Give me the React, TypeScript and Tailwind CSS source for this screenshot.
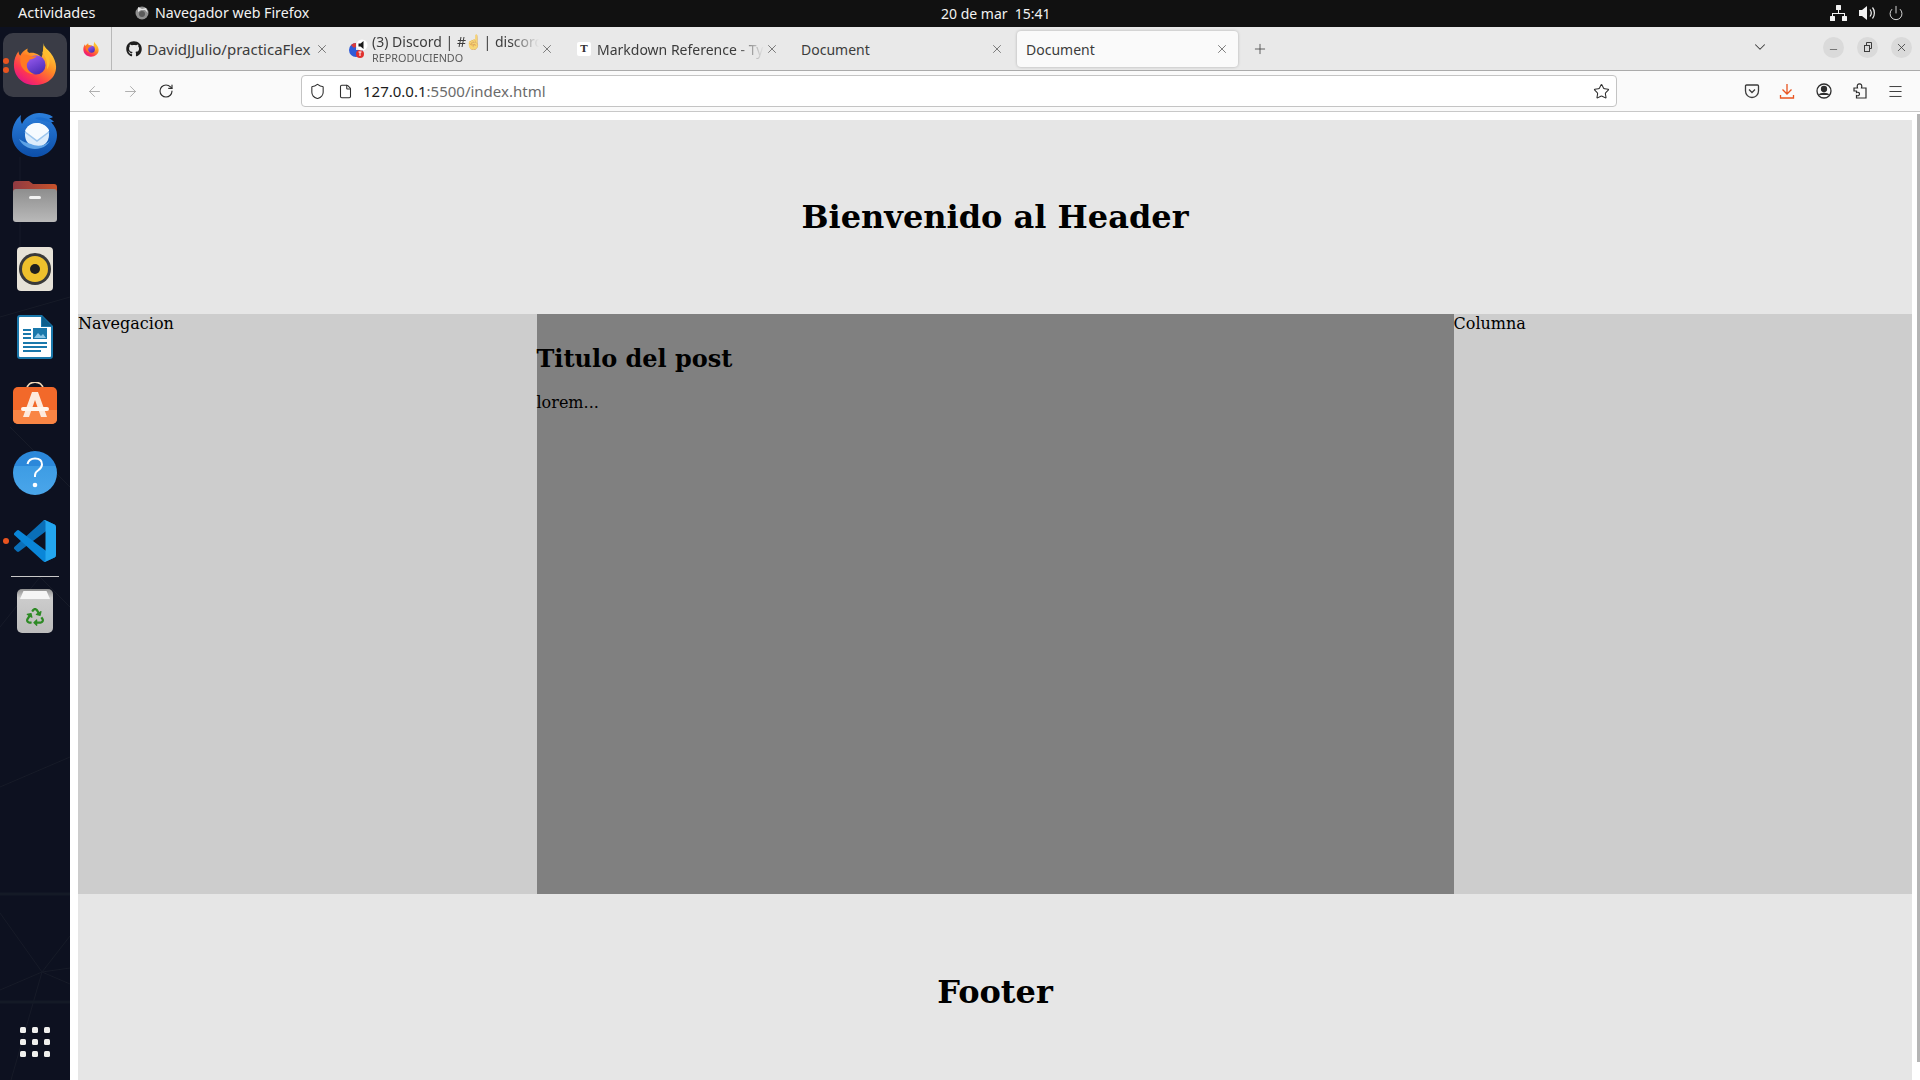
import { ReactNode } from "react";
import { FaGithub, FaRecycle } from "react-icons/fa";
import {
  ArrowLeft,
  ArrowRight,
  ChevronDown,
  File,
  Menu,
  Minus,
  Plus,
  Power,
  RotateCw,
  Shield,
  Star,
  X,
} from "lucide-react";

const serif = "font-['DejaVu_Serif',serif]";
const ui = "font-['Noto_Sans',sans-serif]";

function FirefoxIcon({ size }: { size: number }) {
  return (
    <svg width={size} height={size} viewBox="0 0 48 48">
      <defs>
        <linearGradient id="ffBody" x1="0.8" y1="0.1" x2="0.2" y2="0.95">
          <stop offset="0" stopColor="#ffd43a" />
          <stop offset="0.4" stopColor="#ff8a25" />
          <stop offset="0.75" stopColor="#ff3750" />
          <stop offset="1" stopColor="#e31587" />
        </linearGradient>
        <linearGradient id="ffBall" x1="0.2" y1="0" x2="0.7" y2="1">
          <stop offset="0" stopColor="#9a5cf0" />
          <stop offset="1" stopColor="#4a2bb5" />
        </linearGradient>
      </defs>
      <path
        d="M33 1c1 5 5 7 8 11 4 5 6 11 6 15 0 12-10 20-23 20S1 38 1 25C1 19 3 14 6 10c0 2 1 4 2 5 1-3 4-6 8-8-1 3 0 4 2 5 6-1 11 2 13 5 2-5 3-11 2-16z"
        fill="url(#ffBody)"
      />
      <circle cx="25" cy="25" r="10.5" fill="url(#ffBall)" />
      <path
        d="M8 15c3-2 7-2 10 0 3 1 6 1 8 0-2 3-5 4-8 4 0 2-3 3-3 6 0 5 4 9 9 10-8 1-16-6-16-14 0-2 0-4 0-6z"
        fill="#ff7a22"
      />
      <path d="M33 4c3 4 7 9 7 17 0 3-1 6-3 9 1-8-1-14-5-18 1-3 1-5 1-8z" fill="#ffbd2e" />
    </svg>
  );
}

function ThunderbirdIcon() {
  return (
    <svg width="48" height="48" viewBox="0 0 48 48">
      <defs>
        <linearGradient id="tbBody" x1="0.5" y1="0" x2="0.5" y2="1">
          <stop offset="0" stopColor="#2b7fdc" />
          <stop offset="1" stopColor="#0c4ea8" />
        </linearGradient>
      </defs>
      <path
        d="M10 6c-1 4 0 7 1 9 3-7 10-11 17-11 5 0 10 1 14 4-1 1-3 1-4 1 2 1 4 3 5 4-1 0-2 0-3 0 4 4 6 9 6 13 0 12-10 22-22 22S1 38 1 26c0-8 3-15 9-20z"
        fill="url(#tbBody)"
      />
      <path d="M24 9c6-2 13 0 17 5-6-2-13-2-17-5z" fill="#1c6fd0" />
      <circle cx="26" cy="26" r="12" fill="#dcecfb" />
      <path d="M14 22l12 9 12-9v-1c-3-5-8-7-12-7-6 0-10 3-12 8z" fill="#f6fbff" />
      <path d="M14 23l12 9 12-9" fill="none" stroke="#9cc6ee" strokeWidth="1.5" />
      <path d="M8 30c4 8 13 12 22 9 4-1 7-4 9-7-5 5-13 6-19 3-5-1-9-3-12-5z" fill="#5da2e6" />
    </svg>
  );
}

function FilesIcon() {
  return (
    <svg width="44" height="41" viewBox="0 0 44 41">
      <defs>
        <linearGradient id="folderTab" x1="0" y1="0" x2="1" y2="0">
          <stop offset="0" stopColor="#8f3a42" />
          <stop offset="1" stopColor="#c8532b" />
        </linearGradient>
        <linearGradient id="folderBody" x1="0" y1="0" x2="0" y2="1">
          <stop offset="0" stopColor="#8e8e8e" />
          <stop offset="1" stopColor="#b9b9b9" />
        </linearGradient>
      </defs>
      <path d="M3 0h13l4 3h21a3 3 0 0 1 3 3v14H0V3a3 3 0 0 1 3-3z" fill="url(#folderTab)" />
      <path d="M3 8h38a3 3 0 0 1 3 3v27a3 3 0 0 1-3 3H3a3 3 0 0 1-3-3V11a3 3 0 0 1 3-3z" fill="url(#folderBody)" />
      <rect x="16" y="15" width="12" height="3" rx="1.5" fill="#f2f2f2" />
    </svg>
  );
}

function RhythmboxIcon() {
  return (
    <svg width="36" height="44" viewBox="0 0 36 44">
      <rect width="36" height="44" rx="4" fill="#e6e2d8" />
      <circle cx="18" cy="22" r="16" fill="#3a3a3a" />
      <circle cx="18" cy="22" r="13" fill="#eec02c" />
      <circle cx="18" cy="22" r="5" fill="#1f1f1f" />
    </svg>
  );
}

function WriterIcon() {
  return (
    <svg width="36" height="44" viewBox="0 0 36 44">
      <path d="M3 0h22l11 11v30a3 3 0 0 1-3 3H3a3 3 0 0 1-3-3V3a3 3 0 0 1 3-3z" fill="#1a78ab" />
      <path d="M3 2h21v10h10v29a1 1 0 0 1-1 1H3a1 1 0 0 1-1-1V3a1 1 0 0 1 1-1z" fill="#fff" />
      <path d="M25 1l10 10H25z" fill="#0d5f8d" />
      <rect x="6" y="14" width="8" height="2" fill="#1a78ab" />
      <rect x="6" y="18" width="8" height="2" fill="#1a78ab" />
      <rect x="6" y="22" width="8" height="2" fill="#1a78ab" />
      <rect x="16" y="13" width="14" height="11" fill="#1a78ab" />
      <path d="M17 23l4-5 3 3 2-2 3 4z" fill="#8cc6e6" />
      <rect x="6" y="27" width="24" height="2" fill="#1a78ab" />
      <rect x="6" y="31" width="24" height="2" fill="#1a78ab" />
      <rect x="6" y="35" width="18" height="2" fill="#1a78ab" />
    </svg>
  );
}

function StoreIcon() {
  return (
    <svg width="44" height="42" viewBox="0 0 44 42" className="-mt-[4px]">
      <path d="M14 7c0-9 16-9 16 0" fill="none" stroke="#f1d8b8" strokeWidth="1.6" />
      <rect y="5" width="44" height="37" rx="5" fill="#f2692a" />
      <path d="M0 28h44v9a5 5 0 0 1-5 5H5a5 5 0 0 1-5-5z" fill="#f98544" />
      <path d="M19 10h6l9 25h-6l-6-17-6 17h-6z" fill="#fdeadd" />
      <rect x="8" y="25" width="28" height="4" rx="2" fill="#fff6ee" />
    </svg>
  );
}

function HelpIcon() {
  return (
    <div className="flex h-[44px] w-[44px] items-center justify-center rounded-full bg-[linear-gradient(#2b88da_33%,#3d9ce4_33%,#4aa6ea)]">
      <svg width="20" height="32" viewBox="0 0 20 32">
        <path
          d="M2.500 7c1-4 4-5.500 7.500-5.500 4.500 0 7 2.500 7 6 0 3-2 4.500-4 6-2 1.300-3 2.500-3 5v1.500"
          fill="none"
          stroke="#fff"
          strokeWidth="2"
        />
        <circle cx="10" cy="28" r="2.300" fill="#fff" />
      </svg>
    </div>
  );
}

function VSCodeIcon() {
  return (
    <svg width="42" height="42" viewBox="0 0 100 100">
      <path
        d="M96.500 10.800 75.900.900a6.200 6.200 0 0 0-7.100 1.200L1.400 63.600a4.200 4.200 0 0 0 0 6.200l5.500 5a4.200 4.200 0 0 0 5.300.2L93.300 13.500c2.700-2.100 6.700-.2 6.700 3.300v-.2a6.200 6.200 0 0 0-3.500-5.800z"
        fill="#0a6fb8"
      />
      <path
        d="M96.500 89.200 75.900 99.100a6.200 6.200 0 0 1-7.100-1.200L1.400 36.400a4.200 4.200 0 0 1 0-6.200l5.500-5a4.200 4.200 0 0 1 5.300-.2l81.100 61.500c2.700 2.100 6.700.2 6.700-3.300v.2a6.200 6.200 0 0 1-3.500 5.800z"
        fill="#0a86d8"
      />
      <path
        d="M75.900 99.100a6.200 6.200 0 0 1-7.100-1.200c2.300 2.300 6.200.7 6.200-2.600V4.700c0-3.300-3.900-4.900-6.200-2.600a6.200 6.200 0 0 1 7.100-1.200l20.600 9.900a6.200 6.200 0 0 1 3.500 5.600v67.200a6.200 6.200 0 0 1-3.500 5.600z"
        fill="#23a6ef"
      />
    </svg>
  );
}

function TrashIcon() {
  return (
    <div className="flex h-[44px] w-[36px] flex-col items-center rounded-[5px] bg-[linear-gradient(#8f8f8f,#cccccc_20%,#bcbcbc)]">
      <svg className="mt-[2px]" width="30" height="8" viewBox="0 0 30 8">
        <path d="M0 8l3-7q0-1 1-1h22q1 0 1 1l3 7z" fill="#f5f5f5" />
      </svg>
      <FaRecycle size={18} className="mt-[9px] text-[#2d8a25]" />
    </div>
  );
}

function DockItem({ children, active, dots }: { children: ReactNode; active?: boolean; dots?: number }) {
  return (
    <div className="relative flex h-[68px] w-[70px] items-center justify-center">
      {active && <div className="absolute left-[3px] top-[2px] h-[64px] w-[64px] rounded-[10px] bg-[#3a3c46]" />}
      {dots ? (
        <div className="absolute left-[3px] top-0 flex h-full flex-col justify-center gap-[3px]">
          {Array.from({ length: dots }).map((_, i) => (
            <span key={i} className="h-[6px] w-[6px] rounded-full bg-[#e9541f]" />
          ))}
        </div>
      ) : null}
      <div className="relative flex items-center justify-center">{children}</div>
    </div>
  );
}

function Dock() {
  return (
    <aside className="relative flex h-full w-[70px] shrink-0 flex-col overflow-hidden bg-[#0d1120] pt-[4px]">
      <svg className="absolute left-0 top-0" width="70" height="1053" viewBox="0 0 70 1053">
        <g stroke="#171b28" strokeWidth="1" fill="none">
          <path d="M0 886l42 59 28-36M42 945l28-4M42 945l28 12M42 945L0 963M42 945l-31 108" />
          <path d="M0 290l70-20M0 600l40-50 30 30M10 400l60 60M20 130v100M0 760l70-30" />
        </g>
        <path d="M0 867h70M0 975h70" stroke="#141a26" strokeWidth="3" />
      </svg>
      <DockItem active dots={2}>
        <div className="-mt-[2px]">
          <FirefoxIcon size={44} />
        </div>
      </DockItem>
      <DockItem>
        <ThunderbirdIcon />
      </DockItem>
      <DockItem>
        <FilesIcon />
      </DockItem>
      <DockItem>
        <RhythmboxIcon />
      </DockItem>
      <DockItem>
        <WriterIcon />
      </DockItem>
      <DockItem>
        <StoreIcon />
      </DockItem>
      <DockItem>
        <HelpIcon />
      </DockItem>
      <DockItem dots={1}>
        <VSCodeIcon />
      </DockItem>
      <div className="relative mx-[11px] mt-[1px] h-px bg-[#c8c8c8]" />
      <DockItem>
        <TrashIcon />
      </DockItem>
      <div className="relative mb-[23px] mt-auto grid grid-cols-3 gap-[6px] self-center">
        {Array.from({ length: 9 }).map((_, i) => (
          <span key={i} className="h-[6px] w-[6px] rounded-[1.500px] bg-[#f0f0ee]" />
        ))}
      </div>
    </aside>
  );
}

function TopBar() {
  return (
    <header className={`flex h-[27px] shrink-0 items-center bg-[#111111] pb-[1px] text-[14px] text-[#f2f2f2] ${ui}`}>
      <div className="flex w-[941px] items-center">
        <span className="ml-[18px] w-[116px] text-[14.500px]">Actividades</span>
        <svg width="16" height="16" viewBox="0 0 16 16">
          <circle cx="8" cy="8" r="6.500" fill="#8f8f8f" />
          <path d="M4 2l4 2 4-1 2 5-3-3H7L4 7z" fill="#e4e4e4" />
          <circle cx="8" cy="9" r="3" fill="#5a5a5a" />
        </svg>
        <span className="ml-[5px] text-[14.200px]">Navegador web Firefox</span>
      </div>
      <span>20 de mar&nbsp;&nbsp;15:41</span>
      <div className="ml-auto mr-[16px] flex items-center gap-[12px]">
        <svg width="17" height="16" viewBox="0 0 17 16" fill="#f2f2f2">
          <rect x="6" y="0" width="5" height="5" rx="0.500" />
          <rect x="0" y="11" width="5" height="5" rx="0.500" />
          <rect x="12" y="11" width="5" height="5" rx="0.500" />
          <path d="M8 5h1v3h6v3h-1V9H3v2H2V8h6z" />
        </svg>
        <svg width="17" height="16" viewBox="0 0 17 16" fill="none">
          <path d="M0 5h3l5-4v14l-5-4H0z" fill="#f2f2f2" />
          <path d="M11 4.500c1.500 2 1.500 5 0 7M13.500 2.500c2.500 3 2.500 8 0 11" stroke="#f2f2f2" strokeWidth="1.200" />
        </svg>
        <Power size={16} strokeWidth={1.300} className="text-[#f2f2f2]" />
      </div>
    </header>
  );
}

function Tab({
  icon,
  title,
  sub,
  active,
  fade,
}: {
  icon?: ReactNode;
  title: ReactNode;
  sub?: string;
  active?: boolean;
  fade?: boolean;
}) {
  return (
    <div
      className={`flex h-[36px] w-[221px] shrink-0 items-center pl-[9px] pr-[9px] ${
        active ? "rounded-[4px] bg-[#fafafa] shadow-[0_0_3px_rgba(0,0,0,0.25)]" : ""
      }`}
    >
      {icon && <div className="mr-[5px] flex h-[16px] w-[16px] shrink-0 items-center justify-center">{icon}</div>}
      <div
        className={`min-w-0 flex-1 overflow-hidden whitespace-nowrap ${
          fade ? "[mask-image:linear-gradient(to_left,transparent,black_28px)]" : ""
        }`}
      >
        <div className={`text-[14px] text-[#3c3c3c] ${sub ? "-mt-[1px] leading-[18px]" : "mt-[2px] leading-[20px]"}`}>
          {title}
        </div>
        {sub && <div className="mt-[1px] text-[10.800px] leading-[12px] text-[#5a5a5a]">{sub}</div>}
      </div>
      <X size={14} strokeWidth={1.200} className="ml-[1px] shrink-0 text-[#4a4a4a]" />
    </div>
  );
}

function TabBar() {
  return (
    <div className={`flex h-[44px] shrink-0 items-center border-b border-[#ababab] bg-[#e9e9e9] ${ui}`}>
      <div className="flex h-full w-[42px] shrink-0 items-center justify-center border-r border-[#b8b8b8]">
        <FirefoxIcon size={16} />
      </div>
      <div className="ml-[5px] flex items-center gap-[4px]">
        <Tab
          icon={<FaGithub size={16} className="text-[#1e1e1e]" />}
          title={<span className="text-[15px]">DavidJJulio/practicaFlex</span>}
        />
        <Tab
          icon={
            <svg width="20" height="20" viewBox="0 0 20 20" className="-ml-[2px] shrink-0">
              <path d="M8 4a7 7 0 1 0 7 7H8z" fill="#2f5bd8" />
              <path d="M3 6a7 7 0 0 1 5-2v4a3 3 0 0 0-2 1z" fill="#d83b3b" />
              <circle cx="12" cy="15" r="4" fill="#e0302e" />
              <path d="M10.500 13h3M12 13v4" stroke="#fff" strokeWidth="1" />
              <circle cx="14" cy="6" r="5.500" fill="#fff" />
              <path d="M10.500 4.500h2l3-2.500v8l-3-2.500h-2z" fill="#1a1a1a" />
            </svg>
          }
          title={
            <span>
              (3) Discord | #
              <span className="-ml-[1px] mr-[3px] inline-block w-[12px] opacity-60">☝</span> | discord
            </span>
          }
          sub="REPRODUCIENDO"
          fade
        />
        <Tab
          icon={
            <span className={`flex h-[14px] w-[14px] items-center justify-center rounded-[2px] bg-white text-[10px] font-bold text-[#333] ${serif}`}>
              T
            </span>
          }
          title="Markdown Reference - Typora"
          fade
        />
        <Tab title="Document" />
        <Tab title="Document" active />
      </div>
      <Plus size={16} strokeWidth={1.200} className="ml-[14px] text-[#3c3c3c]" />
      <ChevronDown size={18} strokeWidth={1.400} className="-mt-[3px] ml-[483px] text-[#3c3c3c]" />
      <div className="ml-[54px] flex items-center gap-[13px]">
        <WindowButton>
          <Minus size={11} strokeWidth={1.400} className="mt-[5px]" />
        </WindowButton>
        <WindowButton>
          <svg width="10" height="10" viewBox="0 0 10 10" fill="none" stroke="#3c3c3c">
            <rect x="1.500" y="3.500" width="5" height="6" />
            <path d="M3.500 3.500v-3h5v6h-2" />
          </svg>
        </WindowButton>
        <WindowButton>
          <X size={13} strokeWidth={1.500} />
        </WindowButton>
      </div>
    </div>
  );
}

function WindowButton({ children }: { children: ReactNode }) {
  return (
    <div className="-mt-[3px] flex h-[21px] w-[21px] items-center justify-center rounded-full bg-[#dadada] text-[#3c3c3c]">
      {children}
    </div>
  );
}

function Toolbar() {
  return (
    <div className={`flex h-[41px] shrink-0 items-center border-b border-[#c8c8c8] bg-[#fafafa] ${ui}`}>
      <ArrowLeft size={17} strokeWidth={1.300} className="ml-[16px] text-[#a9a9a9]" />
      <ArrowRight size={17} strokeWidth={1.300} className="ml-[19px] text-[#a9a9a9]" />
      <RotateCw size={16} strokeWidth={1.700} className="ml-[19px] text-[#2e2e2e]" />
      <div className="ml-[127px] flex h-[32px] w-[1316px] items-center rounded-[4px] border border-[#c4c4c4] bg-white">
        <Shield size={17} strokeWidth={1.500} className="ml-[7px] text-[#2e2e2e]" />
        <File size={15} strokeWidth={1.700} className="ml-[12px] text-[#2e2e2e]" />
        <span className="ml-[10px] text-[15px] text-[#1c1c1c]">
          127.0.0.1<span className="text-[#6b6b6b]">:5500/index.html</span>
        </span>
        <Star size={17} strokeWidth={1.500} className="ml-auto mr-[6px] text-[#2e2e2e]" />
      </div>
      <svg className="ml-[127px]" width="16" height="16" viewBox="0 0 16 16" fill="none" stroke="#3c3c3c" strokeWidth="1.300">
        <path d="M2.500 2h11a1 1 0 0 1 1 1v5a6.500 6.500 0 0 1-13 0V3a1 1 0 0 1 1-1z" />
        <path d="M5 6.500l3 3 3-3" />
      </svg>
      <svg className="ml-[19px]" width="16" height="16" viewBox="0 0 16 16" fill="none" stroke="#e9541f" strokeWidth="1.300">
        <path d="M8 1v10M3.500 6.500L8 11l4.500-4.500M1.500 12v3h13v-3" />
      </svg>
      <svg className="ml-[21px]" width="16" height="16" viewBox="0 0 16 16" fill="none" stroke="#2e2e2e" strokeWidth="1.300">
        <circle cx="8" cy="8" r="7" />
        <circle cx="8" cy="6" r="2.500" fill="#2e2e2e" />
        <path d="M3.500 12c1-2 8-2 9 0" fill="#2e2e2e" />
      </svg>
      <svg className="ml-[20px]" width="16" height="16" viewBox="0 0 16 16" fill="none" stroke="#2e2e2e" strokeWidth="1.200">
        <path d="M2 5h3.500C4.500 2 6 .800 7.500.800S10.500 2 9.500 5h4.500v10H4.500v-2.500c2 .800 3-.500 3-1.500s-1-2.300-3-1.500V8H2z" />
      </svg>
      <Menu size={17} strokeWidth={1.300} className="ml-[19px] text-[#2e2e2e]" />
    </div>
  );
}

function Page() {
  return (
    <div className={`relative min-h-0 flex-1 overflow-hidden bg-white px-[8px] pt-[8px] text-black ${serif}`}>
      <div className="flex h-[194px] items-center justify-center bg-[#e6e6e6]">
        <h1 className="text-[32px] font-bold">Bienvenido al Header</h1>
      </div>
      <div className="flex h-[580px]">
        <nav className="flex-1 bg-[#cdcdcd] text-[16px] leading-[19px]">Navegacion</nav>
        <main className="flex-[2] bg-[#808080]">
          <h2 className="mt-[31px] text-[24px] font-bold leading-[28px]">Titulo del post</h2>
          <p className="mt-[20px] text-[16px] leading-[19px]">lorem...</p>
        </main>
        <div className="flex-1 bg-[#cdcdcd] text-[16px] leading-[19px]">Columna</div>
      </div>
      <div className="flex h-[186px] items-center justify-center bg-[#e6e6e6] pt-[10px]">
        <h1 className="text-[32px] font-bold">Footer</h1>
      </div>
      <div className="absolute right-0 top-[2px] h-[948px] w-[3px] bg-[#b4b4b4]" />
    </div>
  );
}

export default function App() {
  return (
    <div className="flex h-[1080px] w-[1920px] flex-col overflow-hidden bg-white">
      <TopBar />
      <div className="flex min-h-0 flex-1">
        <Dock />
        <div className="flex min-w-0 flex-1 flex-col">
          <TabBar />
          <Toolbar />
          <Page />
        </div>
      </div>
    </div>
  );
}
